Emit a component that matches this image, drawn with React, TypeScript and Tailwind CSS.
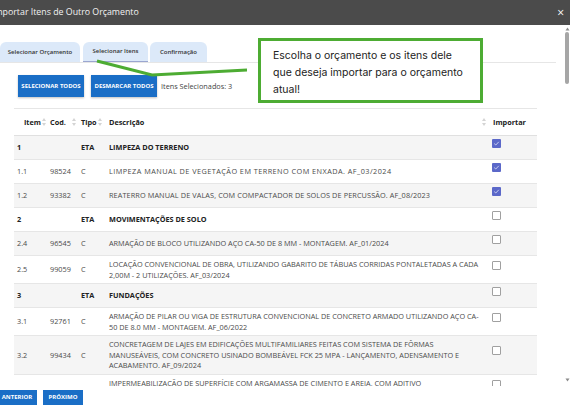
import React from "react";

type Row = {
  item: string;
  cod?: string;
  tipo: string;
  desc: string[];
  bold?: boolean;
  checked?: boolean;
  track?: string;
};

const rows: Row[] = [
  { item: "1", tipo: "ETA", desc: ["LIMPEZA DO TERRENO"], bold: true, checked: true },
  {
    item: "1.1",
    cod: "98524",
    tipo: "C",
    desc: ["LIMPEZA MANUAL DE VEGETAÇÃO EM TERRENO COM ENXADA. AF_03/2024"],
    checked: true,
    track: "tracking-[0.45px]",
  },
  {
    item: "1.2",
    cod: "93382",
    tipo: "C",
    desc: ["REATERRO MANUAL DE VALAS, COM COMPACTADOR DE SOLOS DE PERCUSSÃO. AF_08/2023"],
    checked: true,
    track: "tracking-[0.1px]",
  },
  { item: "2", tipo: "ETA", desc: ["MOVIMENTAÇÕES DE SOLO"], bold: true },
  { item: "2.4", cod: "96545", tipo: "C", desc: ["ARMAÇÃO DE BLOCO UTILIZANDO AÇO CA-50 DE 8 MM - MONTAGEM. AF_01/2024"] },
  {
    item: "2.5",
    cod: "99059",
    tipo: "C",
    desc: [
      "LOCAÇÃO CONVENCIONAL DE OBRA, UTILIZANDO GABARITO DE TÁBUAS CORRIDAS PONTALETADAS A CADA",
      "2,00M - 2 UTILIZAÇÕES. AF_03/2024",
    ],
  },
  { item: "3", tipo: "ETA", desc: ["FUNDAÇÕES"], bold: true },
  {
    item: "3.1",
    cod: "92761",
    tipo: "C",
    desc: [
      "ARMAÇÃO DE PILAR OU VIGA DE ESTRUTURA CONVENCIONAL DE CONCRETO ARMADO UTILIZANDO AÇO CA-",
      "50 DE 8.0 MM - MONTAGEM. AF_06/2022",
    ],
  },
  {
    item: "3.2",
    cod: "99434",
    tipo: "C",
    desc: [
      "CONCRETAGEM DE LAJES EM EDIFICAÇÕES MULTIFAMILIARES FEITAS COM SISTEMA DE FÔRMAS",
      "MANUSEÁVEIS, COM CONCRETO USINADO BOMBEÁVEL FCK 25 MPA - LANÇAMENTO, ADENSAMENTO E",
      "ACABAMENTO. AF_09/2024",
    ],
  },
  {
    item: "3.4",
    cod: "98563",
    tipo: "C",
    desc: [
      "IMPERMEABILIZAÇÃO DE SUPERFÍCIE COM ARGAMASSA DE CIMENTO E AREIA, COM ADITIVO",
      "IMPERMEABILIZANTE, E = 2 CM. AF_06/2018",
    ],
  },
];

function SortIcon() {
  return (
    <svg width="4" height="8" viewBox="0 0 4 8" className="shrink-0">
      <polygon points="2,0 4,3 0,3" fill="#d4d4d4" />
      <polygon points="0,5 4,5 2,8" fill="#d4d4d4" />
    </svg>
  );
}

function Checkbox({ checked }: { checked?: boolean }) {
  if (checked) {
    return (
      <div className="w-[9px] h-[9px] rounded-[1px] bg-[#5b68c9] flex items-center justify-center mb-[8px]">
        <svg width="7" height="7" viewBox="0 0 7 7">
          <polyline points="1.2,3.6 2.8,5 5.8,1.8" fill="none" stroke="#dfe3f7" strokeWidth="0.8" />
        </svg>
      </div>
    );
  }
  return <div className="w-[9px] h-[9px] rounded-[1px] border border-[#a0a0a0] bg-white mb-[8px]" />;
}

const cols = "grid grid-cols-[33px_31px_28px_381px_50px]";

export default function App() {
  return (
    <div className="w-[570px] h-[409px] bg-white relative overflow-hidden font-['Open_Sans',sans-serif]">
      {/* Title bar */}
      <div className="h-[25px] bg-[#4b4b4b] flex items-center justify-between">
        <span className="ml-[-8px] text-[8.8px] text-[#f2f2f2] whitespace-nowrap">Importar Itens de Outro Orçamento</span>
        <span className="mr-[6px] text-[12px] leading-none text-white">×</span>
      </div>

      {/* Scroll area */}
      <div className="h-[361px] flex">
        <div className="w-[556px] overflow-hidden">
          {/* Tabs */}
          <div className="pt-[17px] flex items-end border-b border-[#e6e6e6] h-[38px]">
            <div className="w-[80px] h-[20px] bg-[#dce9f9] rounded-t-[6px] flex items-center justify-center text-[6px] font-semibold text-[#333]">
              Selecionar Orçamento
            </div>
            <div className="ml-[3px] w-[65px] h-[20px] bg-[#dce9f9] rounded-t-[6px] flex items-center justify-center text-[6px] font-semibold text-[#333] border-b-[1.5px] border-[#9ba6d0]">
              Selecionar Itens
            </div>
            <div className="ml-[2px] w-[57px] h-[20px] bg-[#dce9f9] rounded-t-[6px] flex items-center justify-center text-[6px] font-semibold text-[#333]">
              Confirmação
            </div>
          </div>

          {/* Buttons */}
          <div className="mt-[12px] ml-[18px] flex items-center h-[22px]">
            <div className="w-[66px] h-[22px] bg-[#1a6ec6] flex items-center justify-center text-[6px] font-bold text-white shadow-[0_1px_2px_rgba(0,0,0,0.25)]">
              SELECIONAR TODOS
            </div>
            <div className="ml-[7px] w-[66px] h-[22px] bg-[#1a6ec6] flex items-center justify-center text-[6px] font-bold text-white shadow-[0_1px_2px_rgba(0,0,0,0.25)]">
              DESMARCAR TODOS
            </div>
            <span className="ml-[4px] text-[7.3px] text-[#444]">Itens Selecionados: 3</span>
          </div>

          {/* Table */}
          <div className="mt-[11px] ml-[14px] w-[523px] border-t border-[#e6e6e6] text-[7.3px]">
            <div className={`${cols} h-[27px] border-b border-[#e0e0e0] font-bold text-[#222]`}>
              <div className="flex items-center justify-end gap-[1px] pr-[1px]">
                <span>Item</span>
                <SortIcon />
              </div>
              <div className="flex items-center justify-between pl-[3px] pr-[2px]">
                <span>Cod.</span>
                <SortIcon />
              </div>
              <div className="flex items-center justify-between pl-[3px] pr-[4px]">
                <span>Tipo</span>
                <SortIcon />
              </div>
              <div className="flex items-center justify-between pl-[3px] pr-[1px]">
                <span>Descrição</span>
                <SortIcon />
              </div>
              <div className="flex items-center pl-[6px]">
                <span>Importar</span>
              </div>
            </div>
            {rows.map((r, i) => (
              <div
                key={r.item}
                className={`${cols} min-h-[24px] border-b border-[#e6e6e6] leading-[10.5px] ${
                  i % 2 === 0 ? "bg-[#f5f5f5]" : "bg-white"
                } ${r.bold ? "font-bold text-[#222]" : "text-[#4a4a4a]"}`}
              >
                <div className="flex items-center pl-[3px] py-[3px]">{r.item}</div>
                <div className="flex items-center pl-[3px] py-[3px]">{r.cod ?? ""}</div>
                <div className="flex items-center pl-[3px] py-[3px]">{r.tipo}</div>
                <div className={`flex flex-col justify-center pl-[3px] py-[3px] whitespace-nowrap ${r.track ?? ""}`}>
                  {r.desc.map((d) => (
                    <span key={d}>{d}</span>
                  ))}
                </div>
                <div className="flex items-center pl-[5px]">
                  <Checkbox checked={r.checked} />
                </div>
              </div>
            ))}
          </div>
        </div>

        {/* Scrollbar */}
        <div className="ml-[8px] w-[6px] flex flex-col items-center">
          <svg width="5" height="4" viewBox="0 0 5 4" className="mt-[2px]">
            <polygon points="2.5,0.5 4.5,3.5 0.5,3.5" fill="#8a8a8a" />
          </svg>
          <div className="mt-[1px] w-[4px] h-[52px] rounded-[2px] bg-[#a6a6a6]" />
          <div className="flex-1" />
          <svg width="5" height="4" viewBox="0 0 5 4" className="mb-[4px]">
            <polygon points="0.5,0.5 4.5,0.5 2.5,3.5" fill="#8a8a8a" />
          </svg>
        </div>
      </div>

      {/* Footer */}
      <div className="mt-[4px] flex items-center">
        <div className="ml-[-6px] w-[43px] h-[15px] bg-[#1a6ec6] flex items-center justify-center pl-[3px] text-[6px] font-bold text-white">
          ANTERIOR
        </div>
        <div className="ml-[6px] w-[40px] h-[15px] bg-[#1a6ec6] flex items-center justify-center text-[6px] font-bold text-white">
          PRÓXIMO
        </div>
      </div>

      {/* Callout annotation */}
      <svg className="absolute left-0 top-0 pointer-events-none" width="570" height="409">
        <polyline points="97,61 152,75 247,70" fill="none" stroke="#4dac33" strokeWidth="3" />
      </svg>
      <div className="absolute left-[258px] top-[38px] w-[225px] h-[65px] border-[3px] border-[#4dac33] bg-white pl-[12px] pt-[6px] font-['Inter',sans-serif] text-[10.5px] leading-[17px] text-[#222]">
        Escolha o orçamento e os itens dele
        <br />
        que deseja importar para o orçamento
        <br />
        atual!
      </div>
    </div>
  );
}
